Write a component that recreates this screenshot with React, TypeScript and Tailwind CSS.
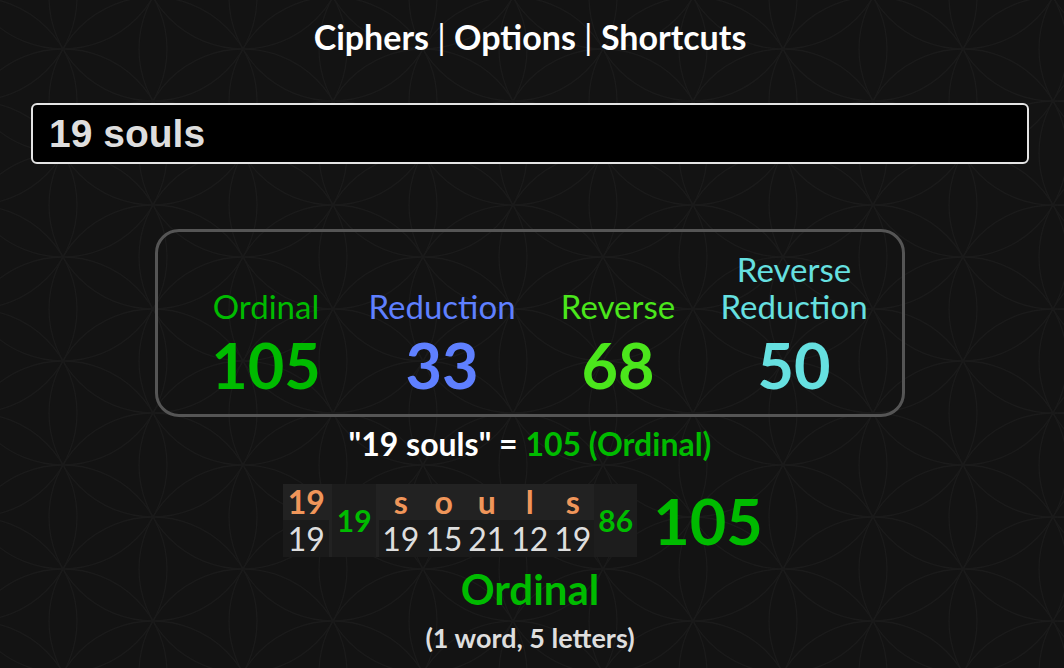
import React from "react";

const ciphers = [
  { label: ["Ordinal"], value: 105, color: "text-[#00bb00]" },
  { label: ["Reduction"], value: 33, color: "text-[#5f80ff]" },
  { label: ["Reverse"], value: 68, color: "text-[#4be61c]" },
  { label: ["Reverse", "Reduction"], value: 50, color: "text-[#66e0e0]" },
];

const letters = [
  { ch: "s", v: 19 },
  { ch: "o", v: 15 },
  { ch: "u", v: 21 },
  { ch: "l", v: 12 },
  { ch: "s", v: 19 },
];

// flower-of-life background, hex lattice of circles
function Pattern() {
  const circles: { x: number; y: number }[] = [];
  for (let i = -2; i < 14; i++) {
    for (let j = -4; j < 10; j++) {
      circles.push({ x: 63 + 90 * i, y: 257 + 104 * j + (i % 2 !== 0 ? 52 : 0) });
    }
  }
  return (
    <svg className="absolute inset-0 w-full h-full" width="1064" height="668">
      {circles.map((c, k) => (
        <circle key={k} cx={c.x} cy={c.y} r={104} fill="none" stroke="#1b1b1b" strokeWidth={1.3} />
      ))}
    </svg>
  );
}

export default function App() {
  return (
    <div className="relative h-[668px] w-full overflow-hidden bg-[#131313] font-[Lato,sans-serif] text-white">
      <Pattern />
      <div className="relative flex flex-col items-center pr-[4px]">
        {/* top nav */}
        <div className="pt-[17px] text-[34px] leading-[40px] font-bold text-white">
          Ciphers <span className="font-normal">|</span> Options <span className="font-normal">|</span> Shortcuts
        </div>

        {/* search input */}
        <div className="mt-[46px] w-[998px] h-[61px] rounded-[6px] border-2 border-[#e4e4e4] bg-black pl-[16px]">
          <input
            readOnly
            defaultValue="19 souls"
            className="w-full h-[57px] bg-transparent outline-none text-[39px] leading-[57px] font-bold text-[#dedede] font-['Liberation_Sans',Arial,sans-serif]"
          />
        </div>

        {/* cipher totals */}
        <div className="mt-[65px] w-[750px] h-[188px] rounded-[24px] border-[3px] border-[#555] flex items-end justify-center pb-[23px]">
          {ciphers.map((c) => (
            <div key={c.label.join(" ")} className={`w-[176px] flex flex-col items-center text-center ${c.color}`}>
              <div className="text-[33px] leading-[37px] mb-[14px] whitespace-nowrap">
                {c.label.map((l) => (
                  <div key={l}>{l}</div>
                ))}
              </div>
              <div className="text-[63px] leading-[52px] font-bold">{c.value}</div>
            </div>
          ))}
        </div>

        {/* phrase summary */}
        <div className="mt-[9px] text-[32px] leading-[36px] font-bold text-white">
          "19 souls" = <span className="text-[#00bb00]">105 (Ordinal)</span>
        </div>

        {/* breakdown */}
        <div className="mt-[22px] flex items-center pr-[14px]">
          <div className="flex bg-[#222] text-[32px]">
            <div className="flex flex-col w-[46px] items-center">
              <div className="h-[36px] leading-[36px] font-bold text-[#f0965a]">19</div>
              <div className="h-[37px] leading-[37px] w-full text-center bg-[#1a1a1a] text-[#dedede]">19</div>
            </div>
            <div className="ml-[3px] w-[44px] flex items-center justify-center bg-[#1c1c1c] font-bold text-[30px] text-[#00bb00]">
              19
            </div>
            <div className="ml-[3px] flex flex-col">
              <div className="flex h-[36px]">
                {letters.map((l, i) => (
                  <div key={i} className="w-[43px] text-center leading-[36px] font-bold text-[#f0965a]">
                    {l.ch}
                  </div>
                ))}
              </div>
              <div className="flex h-[37px] bg-[#1a1a1a]">
                {letters.map((l, i) => (
                  <div key={i} className="w-[43px] text-center leading-[37px] text-[#dedede]">
                    {l.v}
                  </div>
                ))}
              </div>
            </div>
            <div className="w-[43px] flex items-center justify-center bg-[#1d1d1d] font-bold text-[30px] text-[#00bb00]">
              86
            </div>
          </div>
          <div className="ml-[16px] text-[63px] leading-[64px] font-bold text-[#00bb00]">105</div>
        </div>

        <div className="mt-[8px] text-[42px] leading-[48px] font-bold text-[#00bb00]">Ordinal</div>
        <div className="mt-[10px] text-[27px] leading-[30px] font-bold text-[#dedede]">(1 word, 5 letters)</div>
      </div>
    </div>
  );
}
